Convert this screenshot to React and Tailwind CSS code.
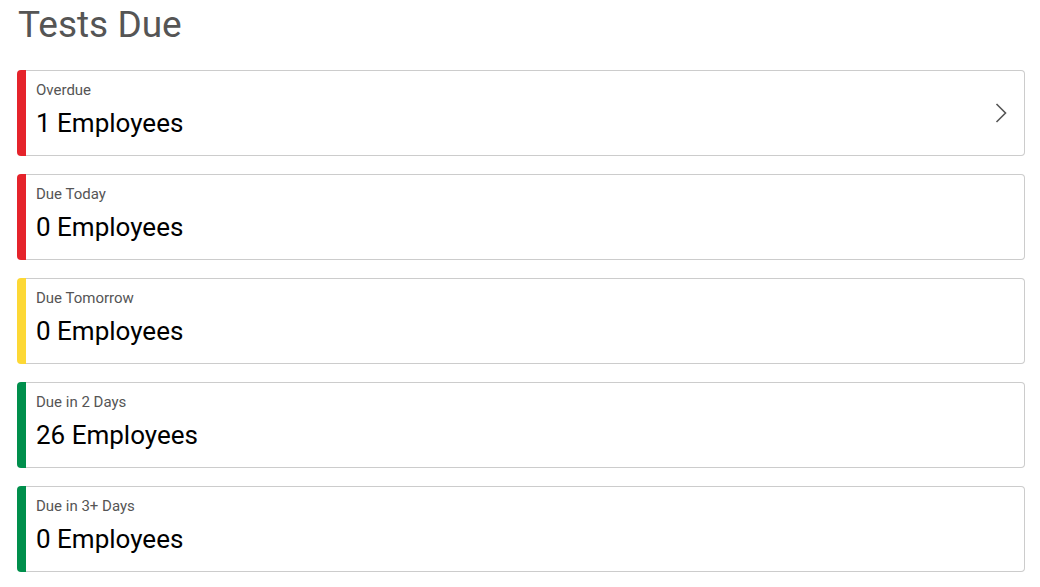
const rows = [
  { label: "Overdue", count: 1, color: "bg-[#e5232b]", link: true },
  { label: "Due Today", count: 0, color: "bg-[#e5232b]" },
  { label: "Due Tomorrow", count: 0, color: "bg-[#fdd835]" },
  { label: "Due in 2 Days", count: 26, color: "bg-[#008f4c]" },
  { label: "Due in 3+ Days", count: 0, color: "bg-[#008f4c]" },
];

function Chevron() {
  return (
    <svg width="12" height="20" viewBox="0 0 12 20" fill="none">
      <path d="M1.5 1l9 9-9 9" stroke="#555" strokeWidth="1.6" />
    </svg>
  );
}

export default function App() {
  return (
    <div className="min-h-screen bg-white pl-[17px] pr-[15px] pt-[2px] font-['Roboto',sans-serif]">
      <h1 className="text-[37px] leading-[46px] text-[#555] pl-[1px]">Tests Due</h1>
      <div className="mt-[22px] flex flex-col gap-[18px]">
        {rows.map((r) => (
          <div key={r.label} className="flex h-[86px]">
            <div className={`w-[9px] rounded-l-[4px] ${r.color}`} />
            <div className="flex-1 flex border-y border-r border-[#ccc] rounded-r-[4px] pl-[10px] pr-[17px]">
              <div className="flex-1 pt-[10px]">
                <div className="text-[15px] leading-[18px] text-[#555]">{r.label}</div>
                <div className="mt-[9px] text-[26px] leading-[30px] text-black">{r.count} Employees</div>
              </div>
              {r.link && (
                <div className="flex items-center">
                  <Chevron />
                </div>
              )}
            </div>
          </div>
        ))}
      </div>
    </div>
  );
}
